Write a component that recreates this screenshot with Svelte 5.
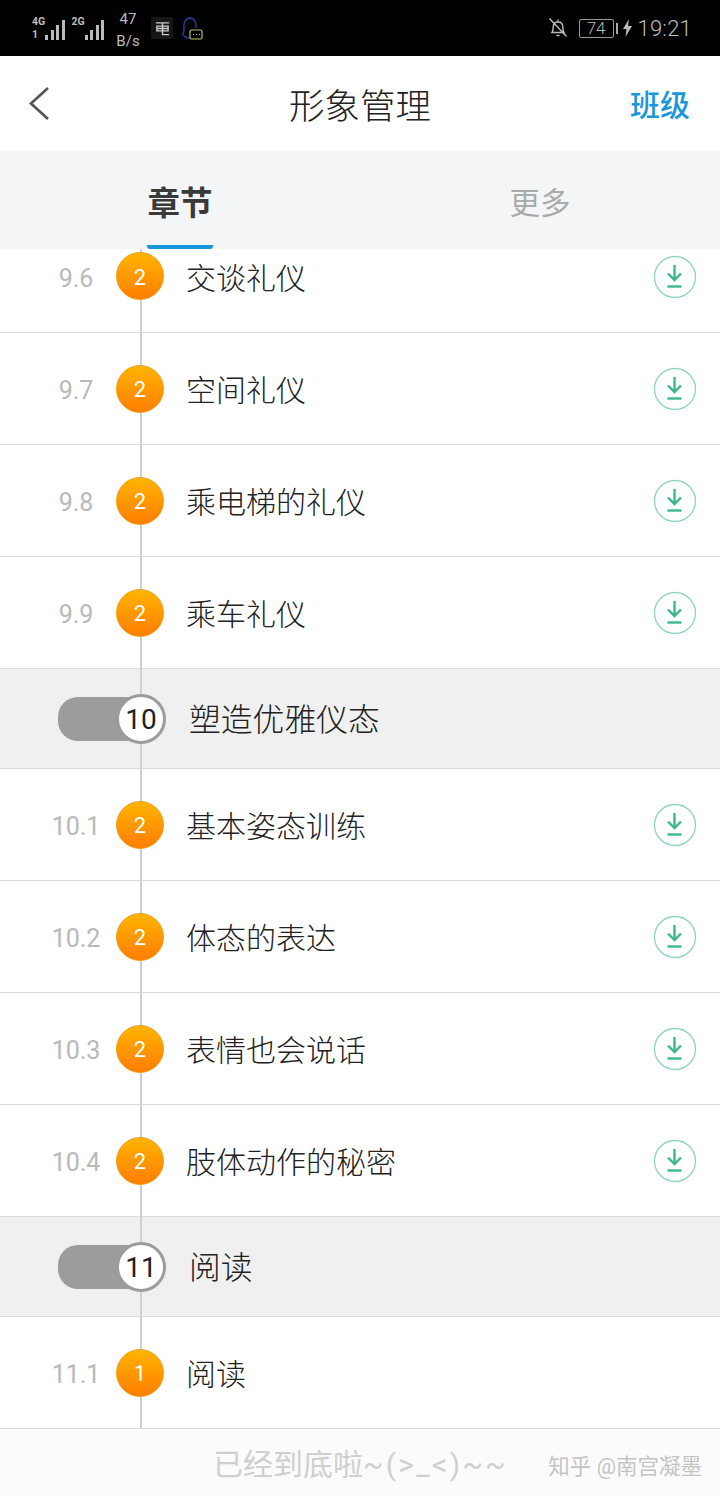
<script>
  const sections = [
    { rows: [
      { n: '9.6', b: 2, t: '交谈礼仪', first: true },
      { n: '9.7', b: 2, t: '空间礼仪' },
      { n: '9.8', b: 2, t: '乘电梯的礼仪' },
      { n: '9.9', b: 2, t: '乘车礼仪' }
    ]},
    { num: 10, title: '塑造优雅仪态', rows: [
      { n: '10.1', b: 2, t: '基本姿态训练' },
      { n: '10.2', b: 2, t: '体态的表达' },
      { n: '10.3', b: 2, t: '表情也会说话' },
      { n: '10.4', b: 2, t: '肢体动作的秘密' }
    ]},
    { num: 11, title: '阅读', rows: [
      { n: '11.1', b: 1, t: '阅读', nodl: true }
    ]}
  ];
  const bars = [5, 10, 15, 20];
</script>

<div class="page">
  <header class="status">
    <div class="status-left">
      <div class="net">
        <div class="net-labels"><span>4G</span><span>1</span></div>
        <div class="bars">{#each bars as h}<i style="height:{h}px"></i>{/each}</div>
      </div>
      <div class="net net2">
        <div class="net-labels"><span>2G</span></div>
        <div class="bars">{#each bars as h}<i style="height:{h}px"></i>{/each}</div>
      </div>
      <div class="speed"><span>47</span><span>B/s</span></div>
      <div class="app-ico">
        <svg width="15" height="15" viewBox="0 0 16 16" fill="none" stroke="#ccc" stroke-width="1.5">
          <path d="M1 2h14M2 5.500h12v5H2zM2 8h12M8 2v12.500h7" />
        </svg>
      </div>
      <svg class="qq" width="22" height="26" viewBox="0 0 22 26" fill="none">
        <path d="M2 19c-1-1 1-3 1-6V8c0-4 3-7 6-7s6 3 6 7v3M3 19c1 1 3 2 5 2" stroke="#2c44a8" stroke-width="1.300" />
        <rect x="9" y="13" width="12" height="9" rx="1.500" stroke="#b9c26a" stroke-width="1.200" />
        <path d="M12 17.500h1M15 17.500h1M18 17.500h1" stroke="#b9c26a" stroke-width="1.200" />
      </svg>
    </div>
    <div class="status-right">
      <svg class="bell" width="20" height="22" viewBox="0 0 20 22" fill="none" stroke="#bbb" stroke-width="1.400">
        <path d="M4 15.500c1.200-1.500 1.200-3 1.200-5.500 0-3 2-5 4.800-5s4.800 2 4.800 5c0 2.500 0 4 1.200 5.500zM10 2.500v2M8.500 18.500h3M1.500 1.500l17 18" />
      </svg>
      <div class="battery"><span>74</span></div>
      <i class="nub"></i>
      <svg width="9" height="18" viewBox="0 0 9 18"><path d="M6 0 0 10h3.500L2.500 18 9 7H5z" fill="#bbb" /></svg>
      <span class="time">19:21</span>
    </div>
  </header>

  <nav class="topbar">
    <svg class="back" width="24" height="36" viewBox="0 0 24 36" fill="none" stroke="#555" stroke-width="2.700">
      <path d="M20 2 3 17.500 20 33" />
    </svg>
    <h1>形象管理</h1>
    <span class="cls">班级</span>
  </nav>

  <div class="tabs">
    <div class="tab active">章节</div>
    <div class="tab">更多</div>
  </div>

  <main class="list">
    {#each sections as s}
      {#if s.num}
        <div class="section">
          <div class="pill">
            <div class="knob">{s.num}</div>
          </div>
          <span class="sec-title">{s.title}</span>
        </div>
      {/if}
      {#each s.rows as r}
        <div class="row" class:first={r.first}>
          <span class="num">{r.n}</span>
          <span class="badge">{r.b}</span>
          <span class="label">{r.t}</span>
          {#if !r.nodl}
            <svg class="dl" width="44" height="44" viewBox="0 0 44 44" fill="none">
              <circle cx="22" cy="22" r="20.500" stroke="#8fd4b8" stroke-width="1.300" />
              <path d="M21.500 10v15M15 18.500l6.500 6.500 6.500-6.500" stroke="#3cb98a" stroke-width="2.400" />
              <path d="M14.500 31.500h14" stroke="#3cb98a" stroke-width="2.400" />
            </svg>
          {/if}
        </div>
      {/each}
    {/each}
  </main>

  <footer class="foot">
    <span class="end">已经到底啦<span class="tail">~(&gt;_&lt;)~~</span></span>
    <span class="mark">知乎 @南宫凝墨</span>
  </footer>
</div>

<style>
  :global(body) { margin: 0; background: #fff; }
  .page {
    width: 720px;
    height: 1496px;
    overflow: hidden;
    display: flex;
    flex-direction: column;
    font-family: "Roboto", "Noto Sans CJK SC", sans-serif;
    color: #333;
  }
  .status {
    height: 56px;
    flex: none;
    background: #000;
    display: flex;
    align-items: center;
    justify-content: space-between;
    padding: 0 28px 0 32px;
    color: #bbb;
    box-sizing: border-box;
  }
  .status-left, .status-right { display: flex; align-items: center; }
  .net { display: flex; align-items: flex-end; height: 24px; }
  .net2 { margin-left: 7px; }
  .net-labels {
    display: flex; flex-direction: column; justify-content: space-between;
    height: 24px; font-size: 10.500px; line-height: 11px; font-weight: 700; width: 13px;
    align-self: flex-start;
    white-space: nowrap;
  }
  .bars { display: flex; align-items: flex-end; gap: 2.500px; height: 20px; }
  .bars i { display: block; width: 3px; background: #bbb; }
  .speed {
    display: flex; flex-direction: column; align-items: center;
    font-size: 15px; line-height: 22px; margin-left: 12px; width: 24px; margin-top: 4px;
  }
  .app-ico {
    width: 22px; height: 22px; margin-left: 11px; background: #161616;
    display: flex; align-items: center; justify-content: center; border-radius: 2px;
  }
  .qq { margin-left: 8px; margin-top: 3px; }
  .bell { margin-right: 11px; }
  .battery {
    width: 33px; height: 17px; border: 1px solid #999; border-radius: 2px;
    display: flex; align-items: center; justify-content: center;
    font-size: 17px; line-height: 17px; font-weight: 300;
  }
  .nub { width: 2px; height: 11px; background: #aaa; margin: 0 5px 0 2px; display: block; }
  .time { font-size: 22px; margin-left: 6px; letter-spacing: 0.200px; font-weight: 300; }

  .topbar {
    height: 95px;
    flex: none;
    background: #fff;
    display: flex;
    align-items: center;
    justify-content: center;
    position: relative;
  }
  .back { position: absolute; left: 28px; top: 30px; }
  h1 { margin: 8px 0 0; font-size: 35.500px; font-weight: 300; color: #222; line-height: 1; }
  .cls {
    position: absolute; right: 30px; top: 35px;
    font-size: 30px; line-height: 1; color: #1a97dc; font-weight: 500;
  }

  .tabs {
    height: 98px;
    flex: none;
    background: #f3f5f6;
    display: grid;
    grid-template-columns: 360px 360px;
    box-sizing: border-box;
  }
  .tab {
    justify-self: center;
    height: 98px;
    box-sizing: border-box;
    padding-top: 35px;
    font-size: 30.500px;
    line-height: 36px;
    color: #aaa;
  }
  .tab.active {
    font-size: 32.500px;
    font-weight: 700;
    color: #3a3a3a;
    border-bottom: 4px solid #1a97dc;
    border-bottom-left-radius: 3px;
    border-bottom-right-radius: 3px;
  }

  .list { flex: none; background: #fff; }
  .row {
    height: 112px;
    box-sizing: border-box;
    border-bottom: 1px solid #dcdcdc;
    display: flex;
    align-items: center;
    position: relative;
  }
  .row.first { height: 84px; align-items: flex-start; }
  .row.first .badge { margin-top: 3px; }
  .row.first .num, .row.first .label { margin-top: 13px; }
  .row.first .dl { margin-top: 6px; }
  .row::before, .section::before {
    content: "";
    position: absolute;
    left: 140px; top: 0; bottom: -1px;
    width: 2px;
    background: #cfcfcf;
  }
  .num {
    width: 80px;
    margin-left: 36px;
    margin-top: 4px;
    flex: none;
    text-align: center;
    font-size: 25px;
    color: #b9b9b9;
    line-height: 34px;
  }
  .badge {
    width: 48px; height: 48px;
    flex: none;
    border-radius: 50%;
    box-sizing: border-box;
    border: 1px solid #f0a020;
    background: linear-gradient(#ffb400, #ff7d00);
    color: #fff;
    font-size: 22px;
    padding-top: 2px;
    display: flex;
    align-items: center;
    justify-content: center;
    position: relative;
  }
  .label {
    margin-left: 22px;
    margin-top: 4px;
    font-size: 30px;
    font-weight: 300;
    line-height: 34px;
    color: #222;
    flex: 1;
  }
  .dl { margin-right: 23px; flex: none; }

  .section {
    height: 100px;
    box-sizing: border-box;
    background: #f0f0f0;
    border-bottom: 1px solid #dcdcdc;
    display: flex;
    align-items: center;
    position: relative;
  }
  .pill {
    margin-left: 58px;
    width: 106px;
    height: 44px;
    border-radius: 20px 22px 22px 20px;
    background: #9c9c9c;
    position: relative;
    flex: none;
  }
  .knob {
    position: absolute;
    right: -2px; top: -3px;
    width: 50px; height: 50px;
    box-sizing: border-box;
    border: 3px solid #9c9c9c;
    border-radius: 50%;
    background: #fff;
    color: #222;
    font-size: 28px;
    padding-top: 2px;
    display: flex;
    align-items: center;
    justify-content: center;
  }
  .sec-title {
    margin-left: 25px;
    margin-top: 3px;
    font-size: 31.800px;
    font-weight: 300;
    line-height: 34px;
    color: #222;
  }

  .foot {
    flex: 1;
    background: #fbfbfb;
    position: relative;
    display: flex;
    align-items: center;
    padding-left: 213px;
    padding-bottom: 2px;
    box-sizing: border-box;
  }
  .end { font-size: 30px; color: #cfcfcf; white-space: nowrap; }
  .tail { letter-spacing: 2.300px; }
  .mark {
    position: absolute;
    right: 18px; top: 24px;
    font-size: 21.500px;
    line-height: 28px;
    color: #c4c4c4;
    white-space: nowrap;
  }
</style>
